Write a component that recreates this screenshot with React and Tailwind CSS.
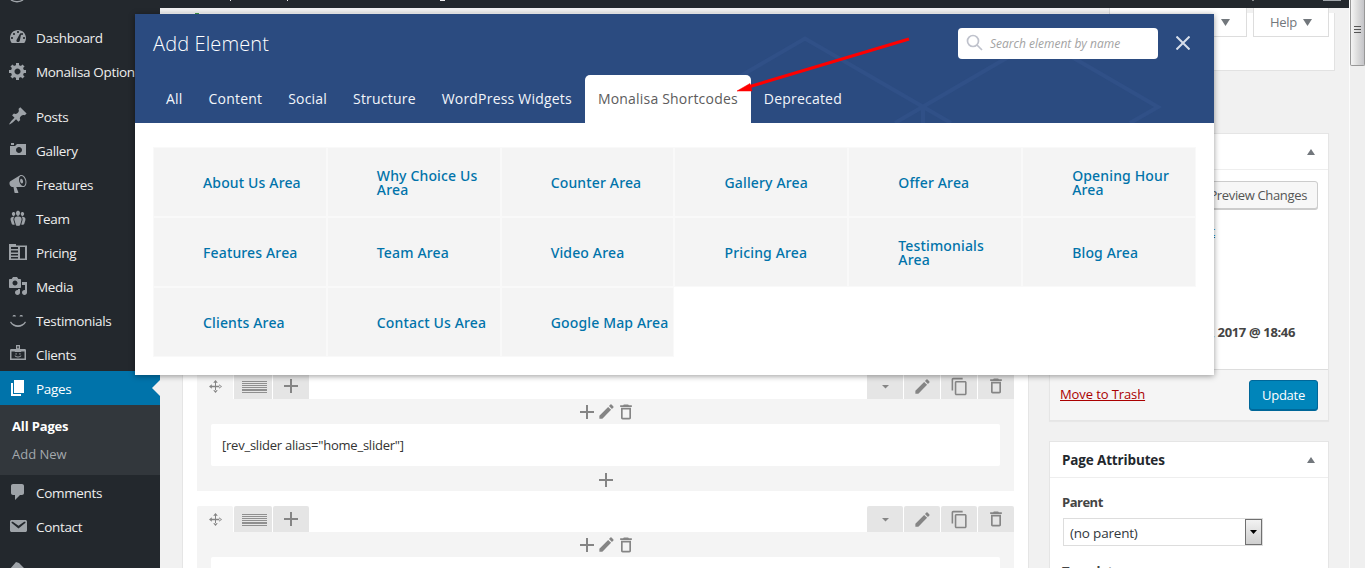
import React from "react";

const ICONS = {
  dashboard:
    "M3.76 16h12.48c1.1-1.37 1.76-3.11 1.76-5 0-4.42-3.58-8-8-8s-8 3.58-8 8c0 1.89.66 3.63 1.76 5zM10 4c.55 0 1 .45 1 1s-.45 1-1 1-1-.45-1-1 .45-1 1-1zM6 6c.55 0 1 .45 1 1s-.45 1-1 1-1-.45-1-1 .45-1 1-1zm8 0c.55 0 1 .45 1 1s-.45 1-1 1-1-.45-1-1 .45-1 1-1zM12.2 6.2l1 .4-1.4 7.2c-.2 1-1 1.4-1.9 1.3-1.1-.2-1.7-1.200-1.400-2.200zM4 10c.55 0 1 .45 1 1s-.45 1-1 1-1-.45-1-1 .45-1 1-1zm12 0c.55 0 1 .45 1 1s-.45 1-1 1-1-.45-1-1 .45-1 1-1z",
  gear: "M18 12h-2.18c-.17.7-.44 1.35-.81 1.93l1.54 1.54-2.1 2.1-1.54-1.54c-.58.36-1.23.63-1.91.79V19H8v-2.18c-.68-.16-1.33-.43-1.91-.79l-1.54 1.54-2.12-2.12 1.54-1.54c-.36-.58-.63-1.23-.79-1.91H1V9.03h2.17c.16-.7.44-1.35.8-1.94L2.43 5.55l2.1-2.1 1.54 1.54c.58-.37 1.24-.64 1.93-.81V2h3v2.18c.68.16 1.33.43 1.91.79l1.54-1.54 2.12 2.12-1.54 1.54c.36.59.64 1.24.8 1.94H18V12zm-8.5 1.5c1.66 0 3-1.34 3-3s-1.34-3-3-3-3 1.34-3 3 1.34 3 3 3z",
  pin: "M10.44 3.02l1.82-1.82 6.36 6.35-1.83 1.82c-1.05-.68-2.48-.57-3.41.36l-.75.75c-.92.93-1.04 2.35-.35 3.41l-1.83 1.82-2.41-2.41-2.8 2.79c-.42.42-3.38 2.71-3.8 2.29s1.86-3.39 2.28-3.81l2.79-2.79L4.1 9.36l1.83-1.82c1.05.69 2.48.57 3.4-.36l.75-.75c.93-.92 1.05-2.35.36-3.41z",
  camera:
    "M6 5V3H3v2h3zm12 10V4H9L7 6H2v9h16zm-7-8c1.65 0 3 1.35 3 3s-1.35 3-3 3-3-1.35-3-3 1.35-3 3-3z",
  megaphone:
    "M18.15 5.94c.46 1.62.38 3.22-.02 4.48-.42 1.28-1.26 2.18-2.3 2.48-.16.06-.26.06-.4.06-.06.02-.12.02-.18.02-.06.02-.14.02-.22.02h-6.8l2.22 5.5c.02.14-.06.26-.14.34-.08.1-.24.16-.34.16H6.95c-.1 0-.26-.06-.34-.16-.08-.08-.16-.2-.14-.34l-1-5.5H4.25l-.02-.02c-.5.06-1.08-.18-1.54-.62s-.88-1.08-1.06-1.88c-.24-.8-.2-1.56-.02-2.2.18-.62.58-1.08 1.06-1.3l.02-.02 9-5.4c.1-.06.18-.1.24-.16.06-.04.14-.08.24-.12.16-.08.28-.12.5-.18 1.04-.3 2.24.1 3.22.98s1.84 2.24 2.26 3.86zm-2.58 5.98h-.02c.4-.1.74-.34 1.04-.7.58-.7.86-1.76.86-3.04 0-.64-.1-1.3-.28-1.98-.34-1.36-1.02-2.5-1.78-3.24s-1.68-1.1-2.46-.88c-.82.22-1.4.96-1.7 2-.32 1.04-.28 2.36.06 3.72.38 1.36 1 2.5 1.8 3.24.78.74 1.62 1.1 2.48.88zm-2.54-7.08c.22-.04.42-.02.62.04.38.16.76.48 1.02 1s.42 1.2.42 1.78c0 .3-.04.56-.12.8-.18.48-.44.84-.86.94-.34.1-.8-.06-1.14-.4s-.64-.86-.78-1.5c-.18-.62-.12-1.24.02-1.72s.48-.84.82-.94z",
  groups:
    "M8.03 4.46c-.29 1.28.55 3.46 1.97 3.46 1.41 0 2.25-2.18 1.96-3.46-.22-.98-1.08-1.63-1.96-1.63-.89 0-1.74.65-1.97 1.63zm-4.13.9c-.25 1.08.47 2.93 1.67 2.93s1.92-1.85 1.67-2.93c-.19-.83-.92-1.39-1.67-1.39s-1.48.56-1.67 1.39zm8.86 0c-.25 1.08.47 2.93 1.66 2.93 1.2 0 1.92-1.85 1.67-2.93-.19-.83-.92-1.39-1.67-1.39-.74 0-1.47.56-1.66 1.39zm-.59 11.43l1.25-4.3C14.2 10 12.71 8.47 10 8.47c-2.72 0-4.21 1.53-3.44 4.02l1.26 4.3C8.05 17.51 9 18 10 18c.98 0 1.94-.49 2.17-1.21zm-6.1-7.63c-.49.67-.96 1.83-.42 3.59l1.12 3.79c-.34.2-.77.31-1.2.31-.85 0-1.65-.41-1.85-1.03l-1.07-3.65c-.65-2.11.61-3.4 2.92-3.4.27 0 .54.02.79.06-.1.1-.2.22-.29.33zm8.35-.39c2.31 0 3.58 1.29 2.92 3.4l-1.07 3.65c-.2.62-1 1.03-1.85 1.03-.43 0-.86-.11-1.2-.31l1.11-3.77c.55-1.78.08-2.94-.42-3.61-.08-.11-.18-.23-.28-.33.25-.04.51-.06.79-.06z",
  table:
    "M1 2h7v1.500h11V18H1zM3 5v2h7V5zM3 8.500v2h7v-2zM3 12v1.500h7V12zM3 15v1.500h7V15zM12 5v11.500h5V5z",
  media:
    "M13 11V4c0-.55-.45-1-1-1h-1.67L9 1H5L3.67 3H2c-.55 0-1 .45-1 1v7c0 .55.45 1 1 1h10c.55 0 1-.45 1-1zM7 4.500c1.380 0 2.500 1.120 2.500 2.500S8.380 9.500 7 9.500 4.500 8.380 4.500 7 5.620 4.500 7 4.500zM14 6h5v10.500c0 1.380-1.120 2.500-2.500 2.500S14 17.880 14 16.500s1.120-2.500 2.500-2.500c.17 0 .34.020.5.050V9h-3V6zm-4 8.050V13h2v3.500c0 1.380-1.120 2.500-2.500 2.500S7 17.880 7 16.500 8.120 14 9.500 14c.17 0 .34.020.5.050z",
  smiley:
    "M4.500 6.500C5 4.600 7.500 4.600 8 6.500zM11.500 6.500c.5-1.900 3-1.900 3.500 0zM2 12.200l1-.6c3 5 11 5 14 0l1 .6c-3.400 6.300-12.600 6.300-16 0z",
  badge:
    "M8 1h4v4h4.500c.8 0 1.500.5 1.500 1.300V16H2V6.300C2 5.500 2.700 5 3.500 5H8zM9.300 2.200v2h1.400v-2zM3.500 7.500v7h13v-7h-3.300V8H6.800v-.5zM7.500 9.300h1.200v1.200H7.500zM11.300 9.300h1.200v1.200h-1.200zM6.500 11.500h1c.5 1.300 4.500 1.300 5 0h1c-.8 2.500-6.200 2.500-7 0z",
  pages: "M6 15V2h10v13H6zm-1 1h8v2H3V5h2v11z",
  comment: "M5 2h9c1.1 0 2 .9 2 2v7c0 1.1-.9 2-2 2h-2l-5 5v-5H5c-1.1 0-2-.9-2-2V4c0-1.100.900-2 2-2z",
  mail: "M3.870 4h13.250C18.370 4 19 4.590 19 5.790v8.420c0 1.190-.63 1.790-1.880 1.790H3.870c-1.250 0-1.880-.6-1.880-1.790V5.790c0-1.200.63-1.790 1.880-1.790zm6.620 8.600l6.740-5.530c.24-.2.43-.66.13-1.070-.29-.41-.82-.42-1.170-.17l-5.700 3.860L4.800 5.830c-.35-.25-.88-.24-1.170.17-.3.41-.11.87.13 1.070z",
  brush: "M8 1l3 1 8 8-2.500 3-4-4-4 5L2 8z",
};

const MD = {
  plus: "M19 13h-6v6h-2v-6H5v-2h6V5h2v6h6v2z",
  edit: "M3 17.250V21h3.750L17.810 9.940l-3.750-3.750L3 17.250zM20.710 7.040a1 1 0 0 0 0-1.410l-2.340-2.340a1 1 0 0 0-1.410 0l-1.830 1.830 3.750 3.750 1.830-1.830z",
  trash:
    "M6 19c0 1.100.9 2 2 2h8c1.100 0 2-.9 2-2V7H6v12zM8 9h8v10H8V9zm7.500-5l-1-1h-5l-1 1H5v2h14V4z",
  copy: "M16 1H4c-1.100 0-2 .9-2 2v14h2V3h12V1zm3 4H8c-1.100 0-2 .9-2 2v14c0 1.100.9 2 2 2h11c1.100 0 2-.9 2-2V7c0-1.100-.9-2-2-2zm0 16H8V7h11v14z",
  caret: "M5.500 9l6.500 6.500 6.500-6.500z",
};

function Dash({ name, className = "" }) {
  return (
    <svg viewBox="0 0 20 20" fillRule="evenodd" className={`size-5 shrink-0 fill-current ${className}`}>
      <path d={ICONS[name]} />
    </svg>
  );
}

function Md({ name, className = "size-5" }) {
  return (
    <svg viewBox="0 0 24 24" fillRule="evenodd" className={`shrink-0 fill-[#858585] ${className}`}>
      <path d={MD[name]} />
    </svg>
  );
}

function MoveIcon() {
  return (
    <svg viewBox="0 0 13 13" className="size-[13px] fill-[#858585]">
      <path d="M6 2h1v9H6zM1.500 5.750h10v1.500h-10zM6.500 0l2.300 2.800H4.200zM6.500 13l2.300-2.800H4.200zM0 6.500l2.800-2.300v4.600zM13 6.500l-2.800-2.300v4.600z" />
    </svg>
  );
}

function MenuItem({ icon, children, current }) {
  return (
    <div
      className={
        current
          ? "relative flex h-[34px] shrink-0 items-start gap-2 bg-[#0073aa] pl-2 pt-[7px] text-white"
          : "flex h-[34px] shrink-0 items-start gap-2 pl-2 pt-[7px] text-[#eee]"
      }
    >
      <Dash name={icon} className={current ? "text-white" : "text-[#9ea3a8]"} />
      <span className="whitespace-nowrap pt-px text-[13.5px] leading-[20px] tracking-[-0.33px]">{children}</span>
      {current && (
        <svg viewBox="0 0 8 16" className="absolute right-0 top-[9px] h-4 w-2 fill-[#f1f1f1]">
          <path d="M8 0v16L0 8z" />
        </svg>
      )}
    </div>
  );
}

function Sidebar() {
  return (
    <nav className="flex w-40 shrink-0 flex-col overflow-hidden bg-[#23282d] pt-3">
      <MenuItem icon="dashboard">Dashboard</MenuItem>
      <MenuItem icon="gear">Monalisa Options</MenuItem>
      <div className="h-[11px] shrink-0" />
      <MenuItem icon="pin">Posts</MenuItem>
      <MenuItem icon="camera">Gallery</MenuItem>
      <MenuItem icon="megaphone">Freatures</MenuItem>
      <MenuItem icon="groups">Team</MenuItem>
      <MenuItem icon="table">Pricing</MenuItem>
      <MenuItem icon="media">Media</MenuItem>
      <MenuItem icon="smiley">Testimonials</MenuItem>
      <MenuItem icon="badge">Clients</MenuItem>
      <MenuItem icon="pages" current>
        Pages
      </MenuItem>
      <div className="flex h-[70px] shrink-0 flex-col bg-[#32373c] pl-3 pt-[7px] text-[13px] leading-[28px]">
        <span className="font-bold tracking-[-0.15px] text-white">All Pages</span>
        <span className="text-[#a3a8ad]">Add New</span>
      </div>
      <MenuItem icon="comment">Comments</MenuItem>
      <MenuItem icon="mail">Contact</MenuItem>
      <div className="h-[11px] shrink-0" />
      <MenuItem icon="brush">Appearance</MenuItem>
    </nav>
  );
}

function RowButton({ name, size = "size-5" }) {
  return (
    <div className="flex h-[26px] w-9 items-center justify-center rounded-t-xs bg-[#e5e5e5]">
      <Md name={name} className={size} />
    </div>
  );
}

function BuilderRow({ children }) {
  return (
    <div className="mb-[15px]">
      <div className="flex justify-between">
        <div className="flex gap-px">
          <div className="flex h-[26px] w-9 items-center justify-center rounded-t-xs bg-[#f4f4f4]">
            <MoveIcon />
          </div>
          <div className="flex h-[26px] w-[38px] items-center justify-center rounded-t-xs bg-[#e5e5e5] pl-[3px]">
            <svg viewBox="0 0 25 12" className="mt-px h-3 w-[25px] fill-[#8f8f8f]">
              <path d="M0 0h25v1H0zM0 2h25v1H0zM0 4h25v1H0zM0 6h25v1H0zM0 8h25v2H0zM0 11h25v1H0z" />
            </svg>
          </div>
          <RowButton name="plus" size="size-6" />
        </div>
        <div className="flex gap-px">
          <RowButton name="caret" size="size-[13px]" />
          <RowButton name="edit" size="size-[19px]" />
          <RowButton name="copy" size="size-[19px]" />
          <RowButton name="trash" />
        </div>
      </div>
      <div className="h-[92px] bg-[#f4f4f4] px-[14px]">
        <div className="flex h-[25px] items-center justify-center">
          <Md name="plus" className="-mr-0.5 size-6" />
          <Md name="edit" className="size-[19px]" />
          <Md name="trash" className="size-5" />
        </div>
        <div className="flex h-[42px] items-center rounded-xs bg-white pl-[11px] pt-0.5 text-[13px] tracking-[-0.23px] text-[#333]">
          {children}
        </div>
        <div className="flex h-[27px] items-center justify-center">
          <Md name="plus" className="size-6" />
        </div>
      </div>
    </div>
  );
}

function BoxHeader({ children }) {
  return (
    <div className="flex h-9 shrink-0 items-center justify-between border-b border-[#eee] pl-3 pr-[13px] pt-px text-[13.5px] font-bold tracking-[-0.15px] text-[#23282d]">
      <span>{children}</span>
      <svg viewBox="0 0 8 6" className="h-1.5 w-2 fill-[#72777c]">
        <path d="M4 0l4 6H0z" />
      </svg>
    </div>
  );
}

function DownTriangle() {
  return (
    <svg viewBox="0 0 9 7" className="h-[7px] w-[9px] fill-[#72777c]">
      <path d="M0 0h9L4.500 7z" />
    </svg>
  );
}

function PublishBox() {
  return (
    <div className="flex h-[288px] flex-col border border-[#e5e5e5] bg-white shadow-[0_1px_1px_rgba(0,0,0,0.04)]">
      <BoxHeader>Publish</BoxHeader>
      <div className="flex h-[199px] flex-col items-end pr-[10px] pt-[11px] text-[13px]">
        <div className="flex h-7 items-center rounded-[3px] border border-[#ccc] bg-[#f7f7f7] px-[10px] pt-0.5 tracking-[-0.35px] text-[#555] shadow-[0_1px_0_#ccc]">
          Preview Changes
        </div>
        <div className="flex w-full pl-[142px] pt-3 leading-5 text-[#0073aa]">
          <span className="underline">Edit</span>
        </div>
        <div className="mt-[81px] pr-[23px] font-bold leading-5 tracking-[-0.35px] text-[#444]">
          Jan 12, 2017 @ 18:46
        </div>
      </div>
      <div className="flex flex-1 items-center justify-between border-t border-[#ddd] bg-[#f5f5f5] pl-[10px] pr-[10px] text-[13px]">
        <span className="tracking-[-0.1px] text-[#a00] underline">Move to Trash</span>
        <div className="flex h-[31px] w-[69px] items-center justify-center rounded-[3px] border border-[#006799] bg-[#0085ba] pt-0.5 tracking-[-0.25px] text-white shadow-[inset_0_-1px_0_#006799]">
          Update
        </div>
      </div>
    </div>
  );
}

function AttributesBox() {
  return (
    <div className="mt-5 h-[200px] border border-[#e5e5e5] bg-white">
      <BoxHeader>Page Attributes</BoxHeader>
      <div className="flex flex-col pl-[13px] pt-[14px] text-[13px] text-[#444]">
        <span className="-ml-px font-bold leading-5 tracking-[-0.5px]">Parent</span>
        <div className="mt-1.5 flex h-7 w-[200px] items-stretch justify-between border border-[#ddd] bg-white pl-1.5 text-[#32373c]">
          <span className="self-center pt-0.5 text-[13.5px] tracking-[-0.2px]">(no parent)</span>
          <span className="flex w-[17px] items-center justify-center border border-[#707070] bg-linear-to-b from-[#f2f2f2] to-[#cfcfcf]">
            <svg viewBox="0 0 7 4" className="h-1 w-[7px] fill-black">
              <path d="M0 0h7L3.500 4z" />
            </svg>
          </span>
        </div>
        <span className="-ml-px mt-[15px] font-bold leading-5 tracking-[-0.4px]">Template</span>
      </div>
    </div>
  );
}

const TABS = [
  "All",
  "Content",
  "Social",
  "Structure",
  "WordPress Widgets",
  "Monalisa Shortcodes",
  "Deprecated",
];

const ELEMENTS = [
  "About Us Area",
  "Why Choice Us Area",
  "Counter Area",
  "Gallery Area",
  "Offer Area",
  "Opening Hour Area",
  "Features Area",
  "Team Area",
  "Video Area",
  "Pricing Area",
  "Testimonials Area",
  "Blog Area",
  "Clients Area",
  "Contact Us Area",
  "Google Map Area",
];

function AddElementDialog() {
  return (
    <div className="absolute left-[135px] top-[14px] flex h-[361px] w-[1079px] flex-col bg-white shadow-[0_1px_6px_rgba(0,0,0,0.4)]">
      <div className="relative flex h-[109px] flex-col justify-between bg-[#2b4b80]">
        <svg viewBox="0 0 1079 109" className="absolute inset-0 h-[109px] w-[1079px] fill-none stroke-[#305087] stroke-[4]">
          <path d="M590 71L670 24.500L816 109M760 109L905 24.500L1023 93L995 109M788 93v16" />
        </svg>
        <div className="relative flex items-center pl-[18px] pr-6 pt-[14px]">
          <h2 className="flex-1 text-[20px] font-light leading-[30px] tracking-[0.12px] text-white">Add Element</h2>
          <div className="flex h-[31px] w-[200px] items-center rounded-[4px] bg-white pl-2">
            <svg viewBox="0 0 17 17" className="-mt-0.5 h-[17px] w-[17px] fill-none stroke-[#bfc2cc] stroke-[1.700]">
              <path d="M12.500 7a5.500 5.500 0 1 1-11 0a5.500 5.500 0 1 1 11 0zM11 11l5 5" />
            </svg>
            <span className="ml-[7px] pt-px text-[12px] italic text-[#a3a3a3]">Search element by name</span>
          </div>
          <svg viewBox="0 0 14 14" className="-mt-px mb-px ml-[18px] h-[14px] w-[14px] fill-none stroke-[#d8dfea] stroke-2">
            <path d="M0.500 0.500l13 13M13.500 0.500l-13 13" />
          </svg>
        </div>
        <div className="relative flex pl-[18px]">
          {TABS.map((tab) => (
            <div
              key={tab}
              className={
                tab === "Monalisa Shortcodes"
                  ? "h-12 rounded-t-[5px] bg-white px-[13px] text-[14px] leading-[48px] tracking-[0.2px] text-[#5c5c5c]"
                  : "h-12 px-[13px] text-[14px] leading-[48px] tracking-[0.2px] text-[#f2f5fa]"
              }
            >
              {tab}
            </div>
          ))}
        </div>
      </div>
      <div className="grid grid-cols-6 px-[18px] pt-6">
        {ELEMENTS.map((name) => (
          <div
            key={name}
            className="flex h-[70px] items-center border border-[#f9f9f9] bg-[#f4f4f4] pl-[49px] pr-1 pt-0.5 font-['Noto_Sans','Open_Sans',sans-serif] text-[14px] font-medium leading-[14px] tracking-[0.15px] text-[#0073aa]"
          >
            {name}
          </div>
        ))}
      </div>
    </div>
  );
}

export default function App() {
  return (
    <div className="relative flex h-[568px] w-[1365px] overflow-hidden bg-[#f1f1f1] font-['Open_Sans','Noto_Sans',sans-serif]">
      <div className="flex w-[1349px] flex-col">
        <div className="h-2 shrink-0 bg-[#23282d]">
          <svg viewBox="0 0 1349 8" className="h-2 w-[1349px] fill-none stroke-[#a0a5aa]">
            <path d="M11 0c3 2.200 9 2.200 12 0" strokeWidth="1.500" />
            <path d="M230.500 0v1M287.500 0v1M440 0.500h5M1253 0v1" stroke="#eee" />
            <path d="M1323 0.500h18" />
          </svg>
        </div>
        <div className="flex min-h-0 flex-1">
          <Sidebar />
          <main className="flex min-w-0 flex-1 flex-col">
            <div className="h-[125px] shrink-0">
              <svg viewBox="0 0 40 6" className="-mb-1.5 h-1.5 w-10 fill-[#46a049]">
                <path d="M35 5h4v1h-4z" />
              </svg>
              <div className="mr-[14px] h-[63px] pt-[5px]">
                <div className="flex h-[58px] justify-end border-b border-r border-[#e2e2e2] bg-white pr-[5px]">
                  <div className="-mt-[5px] flex h-[29px] w-[138px] items-center justify-end border border-t-0 border-[#ddd] bg-white pr-4">
                    <DownTriangle />
                  </div>
                  <div className="-mt-[5px] ml-[6px] flex h-[29px] w-[76px] items-center justify-between border border-t-0 border-[#ddd] bg-white pl-4 pr-4 text-[13px] tracking-[-0.3px] text-[#72777c]">
                    <span className="pt-0.5">Help</span>
                    <DownTriangle />
                  </div>
                </div>
              </div>
            </div>
            <div className="flex flex-1 justify-between pl-[22px] pr-5">
              <div className="flex w-[847px] flex-col border border-[#e5e5e5] bg-white px-[14px] pt-[239px]">
                <BuilderRow>[rev_slider alias="home_slider"]</BuilderRow>
                <BuilderRow />
              </div>
              <div className="w-[280px]">
                <PublishBox />
                <AttributesBox />
              </div>
            </div>
          </main>
        </div>
      </div>
      <div className="w-4 border-l border-[#fcfcfc] bg-[#efefef]">
        <div className="flex h-[66px] items-center justify-center rounded-b-xs border border-t-0 border-[#989898] bg-linear-to-r from-[#f5f5f5] via-[#dcdcdc] to-[#c4c4c8]">
          <svg viewBox="0 0 7 9" className="-mt-1 h-[9px] w-[7px] fill-[#555]">
            <path d="M0 0h7v1H0zM0 3h7v1H0zM0 6h7v1H0z" />
          </svg>
        </div>
      </div>
      <AddElementDialog />
      <svg viewBox="0 0 180 60" className="absolute left-[733px] top-[35px] h-[60px] w-[180px] fill-[#fe0000] stroke-[#fe0000]">
        <path d="M176 4L17 51.500" strokeWidth="3" />
        <path d="M4 56L17 48.500L19 56z" strokeWidth="0.500" />
      </svg>
    </div>
  );
}
